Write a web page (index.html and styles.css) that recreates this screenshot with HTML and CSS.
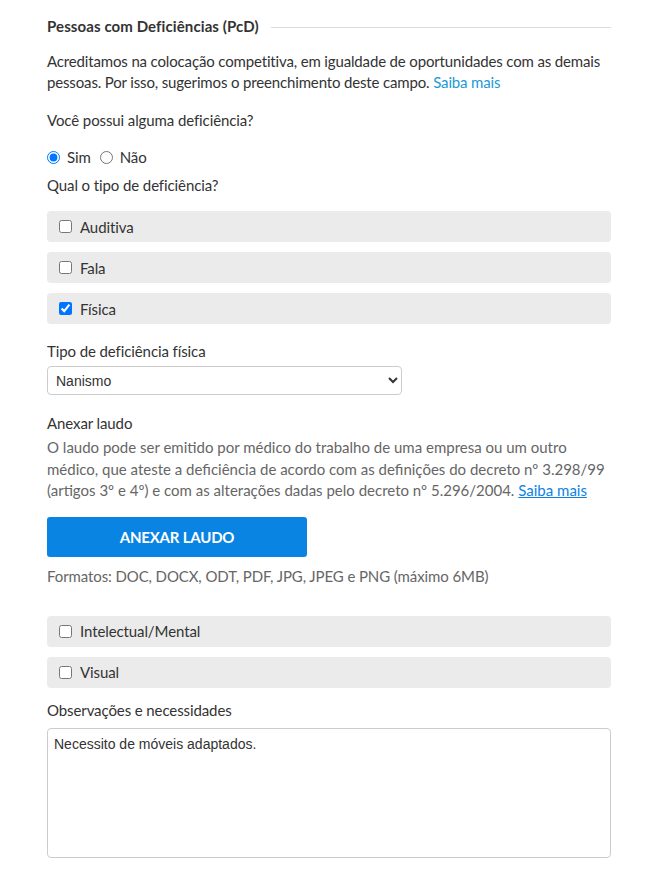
FILE: index.html
```html
<!DOCTYPE html>
<html lang="pt-BR">
<head>
<meta charset="utf-8">
<link rel="stylesheet" href="styles.css">
</head>
<body>
<div class="page">
  <div class="section-title">
    <h2>Pessoas com Deficiências (PcD)</h2>
    <span class="rule"></span>
  </div>
  <p class="intro">Acreditamos na colocação competitiva, em igualdade de oportunidades com as demais pessoas. Por isso, sugerimos o preenchimento deste campo. <a href="#" class="link">Saiba mais</a></p>

  <p class="question">Você possui alguma deficiência?</p>
  <div class="radios">
    <label class="radio"><input type="radio" name="pcd" checked> Sim</label>
    <label class="radio"><input type="radio" name="pcd"> Não</label>
  </div>
  <p class="question q2">Qual o tipo de deficiência?</p>

  <div class="options">
    <label class="option"><input type="checkbox"> Auditiva</label>
    <label class="option"><input type="checkbox"> Fala</label>
    <label class="option"><input type="checkbox" checked> Física</label>
  </div>

  <div class="sub">
    <p class="field-label">Tipo de deficiência física</p>
    <select class="select">
      <option>Nanismo</option>
    </select>

    <p class="field-label attach">Anexar laudo</p>
    <p class="help">O laudo pode ser emitido por médico do trabalho de uma empresa ou um outro médico, que ateste a deficiência de acordo com as definições do decreto nº 3.298/99 (artigos 3º e 4º) e com as alterações dadas pelo decreto nº 5.296/2004. <a href="#" class="link-u">Saiba mais</a></p>
    <button class="btn">ANEXAR LAUDO</button>
    <p class="formats">Formatos: DOC, DOCX, ODT, PDF, JPG, JPEG e PNG (máximo 6MB)</p>
  </div>

  <div class="options more">
    <label class="option"><input type="checkbox"> Intelectual/Mental</label>
    <label class="option"><input type="checkbox"> Visual</label>
  </div>

  <p class="field-label obs">Observações e necessidades</p>
  <textarea class="textarea">Necessito de móveis adaptados.</textarea>
</div>
</body>
</html>
```

FILE: styles.css
```css
* { box-sizing: border-box; }
body {
  margin: 0;
  background: #fff;
  font-family: Lato, "Open Sans", Arial, sans-serif;
  color: #333;
  letter-spacing: -0.1px;
}
.page {
  width: 564px;
  margin-left: 47px;
  padding-top: 16px;
}
.section-title {
  display: flex;
  align-items: center;
  gap: 12px;
}
.section-title h2 {
  margin: 0;
  font-size: 15px;
  font-weight: 700;
  line-height: 20px;
  color: #333;
  letter-spacing: 0.1px;
}
.rule {
  flex: 1;
  height: 1px;
  background: #dcdcdc;
  margin-top: 2px;
}
.intro {
  margin: 15px 0 0;
  font-size: 15px;
  line-height: 21px;
  color: #333;
  letter-spacing: -0.15px;
}
.link {
  color: #1a9ad6;
  text-decoration: none;
}
.question {
  margin: 17px 0 0;
  font-size: 15px;
  line-height: 20px;
}
.radios {
  display: flex;
  gap: 9px;
  margin-top: 17px;
  font-size: 15px;
  line-height: 20px;
}
.radio {
  display: flex;
  align-items: center;
}
.radio input {
  margin: 0 7px 0 0;
  width: 13px;
  height: 13px;
}
.q2 { margin-top: 8px; }
.options {
  display: flex;
  flex-direction: column;
  gap: 10px;
  margin-top: 16px;
}
.option {
  display: flex;
  align-items: center;
  height: 31px;
  padding-left: 12px;
  background: #ebebeb;
  border-radius: 4px;
  font-size: 15px;
  color: #333;
}
.option input {
  margin: 0 8px 0 0;
  width: 13px;
  height: 13px;
}
.sub {
  padding-top: 17px;
}
.field-label {
  margin: 0;
  font-size: 15px;
  line-height: 20px;
  color: #333;
}
.select {
  display: block;
  margin-top: 5px;
  width: 355px;
  height: 29px;
  border: 1px solid #ccc;
  border-radius: 4px;
  background: #fff;
  font-family: "Liberation Sans", Arial, sans-serif;
  font-size: 14px;
  letter-spacing: 0;
  color: #333;
  padding: 0 4px;
}
.attach { margin-top: 18px; }
.help {
  margin: 4px 0 0;
  font-size: 15px;
  line-height: 21.5px;
  color: #666;
  letter-spacing: 0;
}
.link-u {
  color: #0a84e3;
  text-decoration: underline;
}
.btn {
  display: block;
  margin-top: 15px;
  width: 260px;
  height: 40px;
  border: none;
  border-radius: 3px;
  background: #0a84e3;
  color: #fff;
  font-family: Lato, Arial, sans-serif;
  font-size: 15px;
  font-weight: 700;
  letter-spacing: -0.2px;
}
.formats {
  margin: 9px 0 0;
  font-size: 15px;
  line-height: 20px;
  color: #666;
}
.more { margin-top: 30px; }
.obs { margin-top: 12px; }
.textarea {
  display: block;
  margin-top: 8px;
  width: 564px;
  height: 130px;
  border: 1px solid #ccc;
  border-radius: 4px;
  padding: 6px 6px;
  font-family: "Liberation Sans", Arial, sans-serif;
  font-size: 14px;
  line-height: 18px;
  letter-spacing: 0;
  color: #333;
  resize: none;
}
```
